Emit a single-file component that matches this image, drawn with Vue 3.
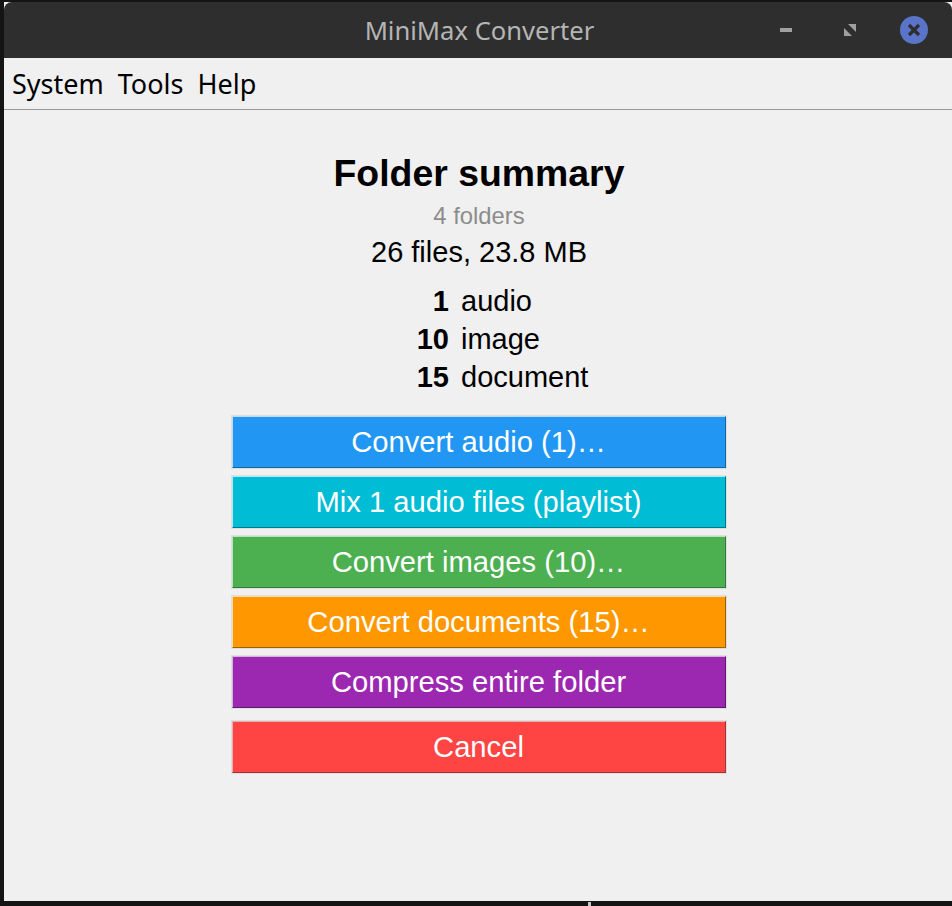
<script setup>
const counts = [
  { n: 1, label: 'audio' },
  { n: 10, label: 'image' },
  { n: 15, label: 'document' }
];

const actions = [
  { text: 'Convert audio (1)…', bg: '#2196f3', top: '#bcdcf5', bottom: '#17689f' },
  { text: 'Mix 1 audio files (playlist)', bg: '#00bcd4', top: '#a6eef5', bottom: '#00798a' },
  { text: 'Convert images (10)…', bg: '#4caf50', top: '#b9e4bb', bottom: '#357a38' },
  { text: 'Convert documents (15)…', bg: '#ff9800', top: '#f5dcb0', bottom: '#9c6200' },
  { text: 'Compress entire folder', bg: '#9c27b0', top: '#d5b3dc', bottom: '#5f1a6c' }
];
</script>

<template>
  <div class="desktop">
    <div class="window">
      <header class="titlebar">
        <span class="title">MiniMax Converter</span>
        <div class="controls">
          <svg class="minimize" width="12" height="4" viewBox="0 0 12 4"><rect width="12" height="4" fill="#a0a0a0" /></svg>
          <svg class="resize" width="12" height="12" viewBox="0 0 12 12">
            <path d="M4 0H12V8zM0 4L8 12H0z" fill="#a0a0a0" />
          </svg>
          <svg class="close" width="28" height="28" viewBox="0 0 28 28">
            <circle cx="14" cy="14" r="14" fill="#5a74c9" />
            <path d="M9 9L19 19M19 9L9 19" stroke="#2e2e2e" stroke-width="3.2" />
          </svg>
        </div>
      </header>
      <nav class="menubar">
        <span>System</span>
        <span>Tools</span>
        <span>Help</span>
      </nav>
      <main class="content">
        <h1>Folder summary</h1>
        <div class="folders">4 folders</div>
        <div class="files">26 files, 23.8 MB</div>
        <div class="counts">
          <template v-for="c in counts" :key="c.label">
            <b>{{ c.n }}</b>
            <span>{{ c.label }}</span>
          </template>
        </div>
        <div class="actions">
          <button
            v-for="a in actions"
            :key="a.text"
            class="btn"
            :style="{ background: a.bg, borderTopColor: a.top, borderLeftColor: a.top, borderBottomColor: a.bottom, borderRightColor: a.bottom }"
          >{{ a.text }}</button>
          <button class="btn cancel">Cancel</button>
        </div>
      </main>
    </div>
    <i class="speck"></i>
  </div>
</template>

<style scoped>
.desktop {
  position: relative;
  width: 952px;
  height: 906px;
  background: #141414;
  padding: 2px 0 5px 4px;
  box-sizing: border-box;
  overflow: hidden;
}

/* little light mark of the wallpaper under the window */
.speck {
  position: absolute;
  left: 588px;
  top: 902px;
  width: 3px;
  height: 4px;
  background: #c8c8c8;
}

.window {
  height: 100%;
  background: #f0f0f0;
  display: flex;
  flex-direction: column;
}

.titlebar {
  height: 56px;
  flex: none;
  background: #2e2e2e;
  border-radius: 8px 8px 0 0;
  position: relative;
  display: flex;
  align-items: center;
  justify-content: center;
  padding-left: 3px;
}

.title {
  font-family: "Noto Sans", sans-serif;
  font-size: 25.6px;
  color: #b5b5b5;
}

.controls {
  position: absolute;
  right: 24px;
  top: 14px;
  display: flex;
  align-items: center;
}

.resize {
  margin-left: 52px;
}

.close {
  margin-left: 44px;
}

.menubar {
  height: 52px;
  flex: none;
  box-sizing: border-box;
  border-bottom: 1px solid #9a9a9a;
  display: flex;
  align-items: center;
  gap: 14px;
  padding: 0 0 0 8px;
  font-family: "Noto Sans", sans-serif;
  font-size: 27px;
  color: #000;
}

.content {
  flex: 1;
  display: flex;
  flex-direction: column;
  align-items: center;
  font-family: "Liberation Sans", sans-serif;
  color: #000;
  padding: 41px 0 0 2px;
}

h1 {
  margin: 0;
  font-size: 37.4px;
  line-height: 44px;
  font-weight: 700;
}

.folders {
  font-size: 23.8px;
  line-height: 26px;
  color: #8c8c8c;
  margin-top: 8px;
}

.files {
  font-size: 29px;
  line-height: 34px;
  margin-top: 6px;
}

.counts {
  width: 494px;
  display: grid;
  grid-template-columns: 217px 1fr;
  column-gap: 12px;
  font-size: 29px;
  line-height: 38px;
  margin-top: 13px;
}

.counts b {
  text-align: right;
}

.actions {
  width: 494px;
  display: flex;
  flex-direction: column;
  gap: 8px;
  margin-top: 20px;
}

.btn {
  height: 52px;
  box-sizing: border-box;
  border: 1px solid;
  box-shadow: 0 0 0 1px #dedede;
  padding: 0 1px 0 0;
  color: #fff;
  font-family: "Liberation Sans", sans-serif;
  font-size: 29.2px;
}

.cancel {
  background: #ff4444;
  border-color: #e6b0b0 #a83030 #a83030 #e6b0b0;
  margin-top: 5px;
}
</style>

<style>
html, body {
  margin: 0;
  background: #141414;
}
</style>
